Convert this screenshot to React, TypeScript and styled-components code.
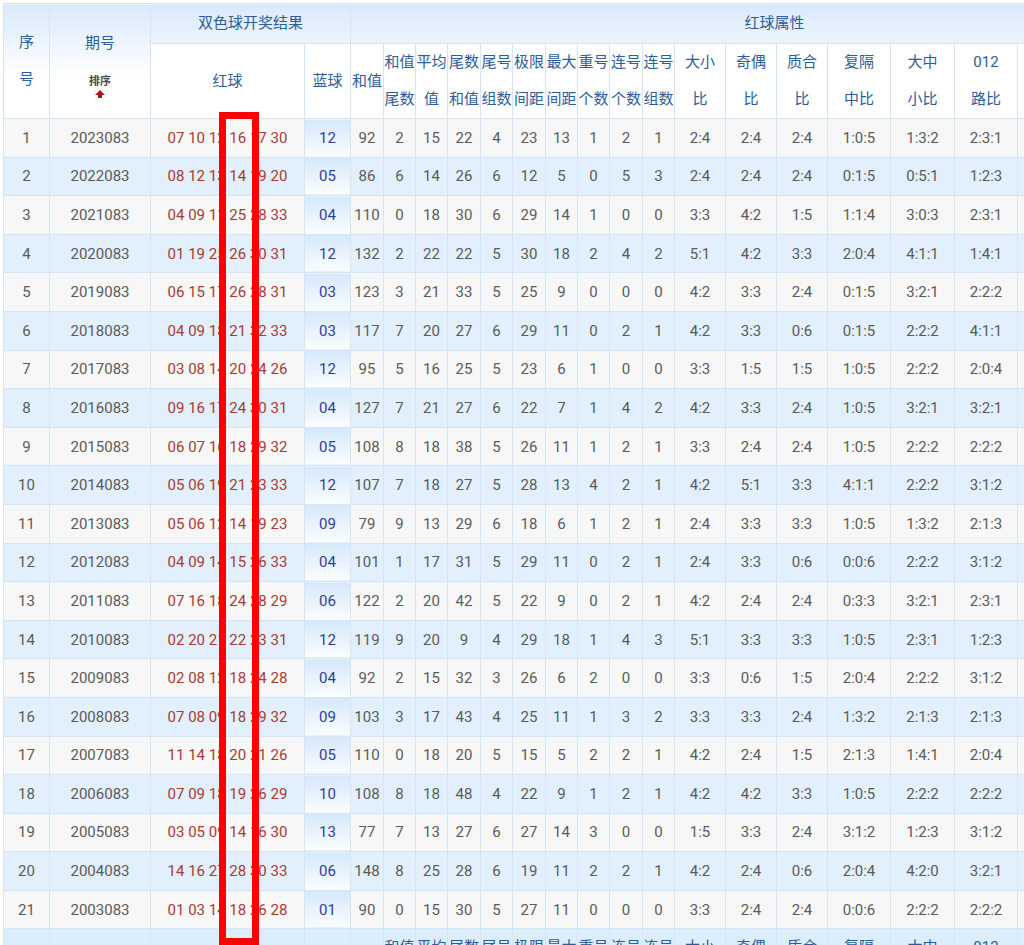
import React from 'react';
import styled, { createGlobalStyle } from 'styled-components';

const GlobalStyle = createGlobalStyle`
  html, body {
    margin: 0;
    padding: 0;
    background: #fff;
    overflow: hidden;
  }
  body {
    font-family: Roboto, "Noto Sans CJK SC", sans-serif;
  }
`;

// 序号 期号 红球 蓝球 和值 + 9 stats + 6 ratios + 3 more columns off to the right
const widths = [46, 101, 154, 46, 33, 32, 32, 33, 32, 33, 32, 32, 33, 32, 51, 51, 51, 63, 64, 63, 60, 60, 61];
const hiddenCols = 3;

const statHeads = [
  ['和值', '尾数'], ['平均', '值'], ['尾数', '和值'], ['尾号', '组数'], ['极限', '间距'],
  ['最大', '间距'], ['重号', '个数'], ['连号', '个数'], ['连号', '组数'],
];
const ratioHeads = [
  ['大小', '比'], ['奇偶', '比'], ['质合', '比'], ['复隔', '中比'], ['大中', '小比'], ['012', '路比'],
];

const raw = [
  '2023083|07 10 12 16 17 30|12|92 2 15 22 4 23 13 1 2 1|2:4 2:4 2:4 1:0:5 1:3:2 2:3:1',
  '2022083|08 12 13 14 19 20|05|86 6 14 26 6 12 5 0 5 3|2:4 2:4 2:4 0:1:5 0:5:1 1:2:3',
  '2021083|04 09 11 25 28 33|04|110 0 18 30 6 29 14 1 0 0|3:3 4:2 1:5 1:1:4 3:0:3 2:3:1',
  '2020083|01 19 25 26 30 31|12|132 2 22 22 5 30 18 2 4 2|5:1 4:2 3:3 2:0:4 4:1:1 1:4:1',
  '2019083|06 15 17 26 28 31|03|123 3 21 33 5 25 9 0 0 0|4:2 3:3 2:4 0:1:5 3:2:1 2:2:2',
  '2018083|04 09 18 21 32 33|03|117 7 20 27 6 29 11 0 2 1|4:2 3:3 0:6 0:1:5 2:2:2 4:1:1',
  '2017083|03 08 14 20 24 26|12|95 5 16 25 5 23 6 1 0 0|3:3 1:5 1:5 1:0:5 2:2:2 2:0:4',
  '2016083|09 16 17 24 30 31|04|127 7 21 27 6 22 7 1 4 2|4:2 3:3 2:4 1:0:5 3:2:1 3:2:1',
  '2015083|06 07 16 18 29 32|05|108 8 18 38 5 26 11 1 2 1|3:3 2:4 2:4 1:0:5 2:2:2 2:2:2',
  '2014083|05 06 19 21 23 33|12|107 7 18 27 5 28 13 4 2 1|4:2 5:1 3:3 4:1:1 2:2:2 3:1:2',
  '2013083|05 06 12 14 19 23|09|79 9 13 29 6 18 6 1 2 1|2:4 3:3 3:3 1:0:5 1:3:2 2:1:3',
  '2012083|04 09 14 15 26 33|04|101 1 17 31 5 29 11 0 2 1|2:4 3:3 0:6 0:0:6 2:2:2 3:1:2',
  '2011083|07 16 18 24 28 29|06|122 2 20 42 5 22 9 0 2 1|4:2 2:4 2:4 0:3:3 3:2:1 2:3:1',
  '2010083|02 20 21 22 23 31|12|119 9 20 9 4 29 18 1 4 3|5:1 3:3 3:3 1:0:5 2:3:1 1:2:3',
  '2009083|02 08 12 18 24 28|04|92 2 15 32 3 26 6 2 0 0|3:3 0:6 1:5 2:0:4 2:2:2 3:1:2',
  '2008083|07 08 09 18 29 32|09|103 3 17 43 4 25 11 1 3 2|3:3 3:3 2:4 1:3:2 2:1:3 2:1:3',
  '2007083|11 14 18 20 21 26|05|110 0 18 20 5 15 5 2 2 1|4:2 2:4 1:5 2:1:3 1:4:1 2:0:4',
  '2006083|07 09 18 19 26 29|10|108 8 18 48 4 22 9 1 2 1|4:2 4:2 3:3 1:0:5 2:2:2 2:2:2',
  '2005083|03 05 09 14 16 30|13|77 7 13 27 6 27 14 3 0 0|1:5 3:3 2:4 3:1:2 1:2:3 3:1:2',
  '2004083|14 16 27 28 30 33|06|148 8 25 28 6 19 11 2 2 1|4:2 2:4 0:6 2:0:4 4:2:0 3:2:1',
  '2003083|01 03 14 18 26 28|01|90 0 15 30 5 27 11 0 0 0|3:3 2:4 2:4 0:0:6 2:2:2 2:2:2',
];

const draws = raw.map((line) => {
  const [issue, reds, blue, stats, ratios] = line.split('|');
  return { issue, reds, blue, stats: stats.split(' '), ratios: ratios.split(' ') };
});

const blanks = Array.from({ length: hiddenCols }, (_, i) => i);

const Page = styled.div`
  position: relative;
  width: max-content;
  padding: 3px 0 0 3px;
`;

const Grid = styled.table`
  border-collapse: collapse;
  table-layout: fixed;
  width: 1195px;
  font-size: 15px;
  color: #5b5b5b;
`;

const Col = styled.col<{ $w: number }>`
  width: ${(p) => p.$w}px;
`;

const HeadRow = styled.tr<{ $h: number }>`
  height: ${(p) => p.$h}px;
`;

type Tone = 'tall' | 'band' | 'plain' | 'foot';

const headBg: Record<Tone, string> = {
  tall: 'linear-gradient(to bottom, #d9e9fa 0%, #ffffff 62%)',
  band: 'linear-gradient(to bottom, #d9e9fa 0%, #edf5fd 100%)',
  plain: '#ffffff',
  foot: 'transparent',
};

const Head = styled.th<{ $tone: Tone }>`
  padding: 0;
  border: 1px solid #d5e5f4;
  background: ${(p) => headBg[p.$tone]};
  color: #2d5d9b;
  font-weight: 400;
  line-height: 37px;
  text-align: center;
  vertical-align: middle;
  white-space: nowrap;
`;

const Line = styled.span`
  display: block;
  line-height: 37px;
`;

const SortTag = styled.div`
  display: flex;
  flex-direction: column;
  align-items: center;
  gap: 2px;
  padding-top: 14px;
  font-size: 11px;
  line-height: 12px;
  font-weight: 700;
  color: #4a4a4a;
`;

const Row = styled.tr<{ $alt: boolean }>`
  height: 38.6px;
  background: ${(p) => (p.$alt ? '#e1f0fc' : '#f7f7f7')};
`;

const FootRow = styled.tr`
  height: 75px;
  background: #dcedfb;
`;

const Cell = styled.td<{ $tone?: 'red' | 'blue' }>`
  padding: 0;
  border: 1px solid #d5e5f4;
  text-align: center;
  vertical-align: middle;
  white-space: nowrap;
  color: ${(p) => (p.$tone === 'red' ? '#a93b33' : p.$tone === 'blue' ? '#2f3f9f' : '#5b5b5b')};
  background: ${(p) => (p.$tone === 'blue' ? 'linear-gradient(to bottom, #d5e8fa 0%, #fbfdff 100%)' : 'transparent')};
`;

const Marker = styled.div`
  position: absolute;
  left: 219px;
  top: 112px;
  width: 40px;
  height: 833px;
  box-sizing: border-box;
  border: 7px solid #ff0000;
  pointer-events: none;
`;

const SortArrow = () => (
  <svg width="10" height="8" viewBox="0 0 10 8">
    <path d="M5 0 L10 5 H7 V8 H3 V5 H0 Z" fill="#b3120f" />
  </svg>
);

const TwoLine = ({ top, bottom }: { top: string; bottom: string }) => (
  <>
    <Line>{top}</Line>
    <Line>{bottom}</Line>
  </>
);

const LabelRow = ({ tone }: { tone: Tone }) => (
  <>
    <Head $tone={tone}>红球</Head>
    <Head $tone={tone}>蓝球</Head>
    <Head $tone={tone}>和值</Head>
    {statHeads.map(([a, b], i) => (
      <Head key={'s' + i} $tone={tone}>
        <TwoLine top={a} bottom={b} />
      </Head>
    ))}
    {ratioHeads.map(([a, b], i) => (
      <Head key={'r' + i} $tone={tone}>
        <TwoLine top={a} bottom={b} />
      </Head>
    ))}
    {blanks.map((i) => (
      <Head key={'h' + i} $tone={tone} />
    ))}
  </>
);

export default function App() {
  return (
    <Page>
      <GlobalStyle />
      <Grid>
        <colgroup>
          {widths.map((w, i) => (
            <Col key={i} $w={w} />
          ))}
        </colgroup>
        <thead>
          <HeadRow $h={40}>
            <Head rowSpan={2} $tone="tall">
              <TwoLine top="序" bottom="号" />
            </Head>
            <Head rowSpan={2} $tone="tall">
              <Line>期号</Line>
              <SortTag>
                排序
                <SortArrow />
              </SortTag>
            </Head>
            <Head colSpan={2} $tone="band">双色球开奖结果</Head>
            <Head colSpan={19} $tone="band">红球属性</Head>
          </HeadRow>
          <HeadRow $h={75}>
            <LabelRow tone="plain" />
          </HeadRow>
        </thead>
        <tbody>
          {draws.map((d, i) => (
            <Row key={d.issue} $alt={i % 2 === 1}>
              <Cell>{i + 1}</Cell>
              <Cell>{d.issue}</Cell>
              <Cell $tone="red">{d.reds}</Cell>
              <Cell $tone="blue">{d.blue}</Cell>
              {d.stats.map((v, j) => (
                <Cell key={'s' + j}>{v}</Cell>
              ))}
              {d.ratios.map((v, j) => (
                <Cell key={'r' + j}>{v}</Cell>
              ))}
              {blanks.map((j) => (
                <Cell key={'h' + j} />
              ))}
            </Row>
          ))}
        </tbody>
        <tfoot>
          <FootRow>
            <Head $tone="foot">序号</Head>
            <Head $tone="foot">期号</Head>
            <LabelRow tone="foot" />
          </FootRow>
        </tfoot>
      </Grid>
      <Marker />
    </Page>
  );
}
